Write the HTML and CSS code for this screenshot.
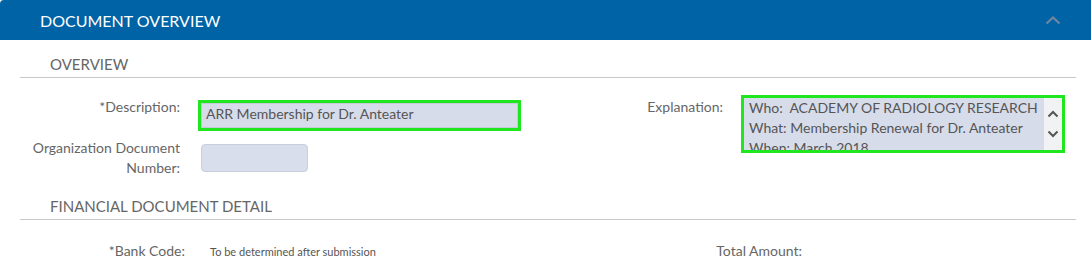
FILE: index.html
```html
<!DOCTYPE html>
<html lang="en">
<head>
    <meta charset="UTF-8">
    <meta name="viewport" content="width=device-width, initial-scale=1.0">
    <title>Document Overview</title>
    <link rel="stylesheet" href="styles.css">
</head>
<body>
    <div class="panel">
        <div class="panel-header">
            <span>DOCUMENT OVERVIEW</span>
            <svg class="collapse" width="16" height="10" viewBox="0 0 16 10">
                <polyline points="1.5,8.5 8,2.5 14.5,8.5" fill="none" stroke="#6d87a0" stroke-width="2.2"/>
            </svg>
        </div>

        <div class="panel-body">
            <div class="section-title">OVERVIEW</div>

            <div class="overview-grid">
                <div class="col">
                    <div class="field">
                        <label class="field-label">*Description:</label>
                        <div class="highlight desc-box">
                            <input type="text" class="text-input" value="ARR Membership for Dr. Anteater">
                        </div>
                    </div>
                    <div class="field second">
                        <label class="field-label">Organization Document<br>Number:</label>
                        <input type="text" class="short-input">
                    </div>
                </div>

                <div class="col">
                    <div class="field">
                        <label class="field-label explain">Explanation:</label>
                        <div class="highlight textarea-box">
                            <div class="textarea-text">Who:&nbsp; ACADEMY OF RADIOLOGY RESEARCH<br>What: Membership Renewal for Dr. Anteater<br>When: March 2018</div>
                            <div class="scrollbar">
                                <svg width="12" height="8" viewBox="0 0 12 8"><polyline points="1.5,6.5 6,2 10.5,6.5" fill="none" stroke="#555" stroke-width="2"/></svg>
                                <svg width="12" height="8" viewBox="0 0 12 8"><polyline points="1.5,1.5 6,6 10.5,1.5" fill="none" stroke="#555" stroke-width="2"/></svg>
                            </div>
                        </div>
                    </div>
                </div>
            </div>

            <div class="section-title financial">FINANCIAL DOCUMENT DETAIL</div>

            <div class="financial-grid">
                <div class="field-label">*Bank Code:</div>
                <div class="small-value">To be determined after submission</div>
                <div class="field-label">Total Amount:</div>
                <div></div>
            </div>
        </div>
    </div>
</body>
</html>
```

FILE: styles.css
```css
body {
    margin: 0;
    font-family: Lato, "Open Sans", sans-serif;
    background: white;
}

.panel {
    width: 1091px;
}

.panel-header {
    display: flex;
    justify-content: space-between;
    align-items: center;
    height: 40px;
    padding: 0 30px 0 40px;
    background-color: #0063a6;
    border-top-left-radius: 4px;
    color: white;
    font-size: 16px;
}

.panel-body {
    padding: 0 15px 0 20px;
}

.section-title {
    margin-top: 14px;
    padding: 0 30px 3px;
    line-height: 20px;
    font-size: 15px;
    color: #666;
    border-bottom: 1px solid #c8c8c8;
}

.section-title.financial {
    margin-top: 18px;
}

.overview-grid {
    display: grid;
    grid-template-columns: 525px 1fr;
    column-gap: 18px;
    margin-top: 17px;
}

.field {
    display: flex;
    align-items: flex-start;
}

.field.second {
    margin-top: 7px;
}

.field-label {
    width: 160px;
    flex: none;
    padding-right: 18px;
    box-sizing: border-box;
    text-align: right;
    font-size: 14px;
    line-height: 20px;
    color: #666;
}

.field:first-child .field-label {
    padding-top: 2px;
}

.col .field-label {
    width: 178px;
}

.highlight {
    border: 3px solid #1fe61f;
    box-sizing: border-box;
}

.desc-box {
    width: 323px;
    height: 31px;
    margin-top: 5px;
}

.text-input {
    width: 100%;
    height: 100%;
    box-sizing: border-box;
    margin: 0;
    padding: 0 4px 4px;
    border: 1px solid #c5cad6;
    background-color: #d7dcea;
    font-family: Lato, sans-serif;
    font-size: 14px;
    color: #555;
}

.short-input {
    width: 107px;
    height: 28px;
    box-sizing: border-box;
    margin-top: 6px;
    margin-left: 3px;
    border: 1px solid #c9cfdc;
    border-radius: 4px;
    background-color: #d8deeb;
}

.textarea-box {
    display: flex;
    width: 324px;
    height: 58px;
    overflow: hidden;
}

.textarea-text {
    flex: 1;
    padding-left: 5px;
    background-color: #d7dcea;
    font-size: 14px;
    line-height: 20px;
    color: #555;
    white-space: nowrap;
    overflow: hidden;
}

.scrollbar {
    width: 18px;
    display: flex;
    flex-direction: column;
    align-items: center;
    justify-content: space-around;
    padding: 6px 0 6px;
    box-sizing: border-box;
    background-color: #f1f2f4;
}

.financial-grid {
    display: grid;
    grid-template-columns: 165px 407px 160px 1fr;
    column-gap: 25px;
    margin-top: 21px;
    align-items: center;
}

.financial-grid .field-label {
    width: auto;
    padding-right: 0;
}

.small-value {
    font-size: 11px;
    color: #555;
}
```
